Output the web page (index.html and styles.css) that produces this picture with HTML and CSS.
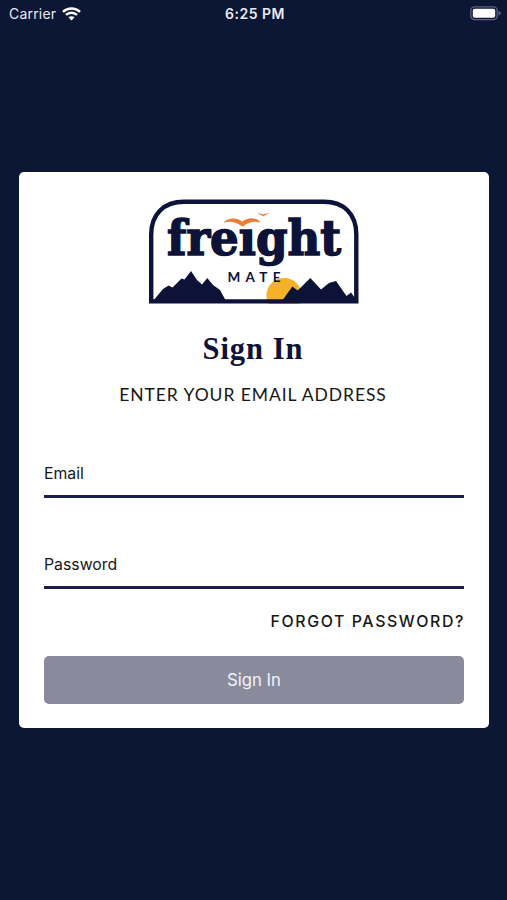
FILE: index.html
```html
<!DOCTYPE html>
<html lang="en">
<head>
<meta charset="utf-8">
<meta name="viewport" content="width=device-width, initial-scale=1">
<title>Freight Mate</title>
<link rel="stylesheet" href="styles.css">
</head>
<body>
<header class="status">
  <div class="carrier">
    <span>Carrier</span>
    <svg class="wifi" viewBox="0 0 19 14" aria-hidden="true">
      <path d="M1 4.900C5.800.4 13.200.4 18 4.900M4 7.900C7.200 5 11.800 5 15 7.900" fill="none" stroke="currentColor" stroke-width="2.500"/>
      <path d="M6.400 10.300C8.200 8.800 10.800 8.800 12.600 10.300L9.500 13.500Z" fill="currentColor"/>
    </svg>
  </div>
  <time class="clock">6:25 PM</time>
  <svg class="battery" viewBox="0 0 31 15" aria-hidden="true">
    <rect x=".8" y=".8" width="26.400" height="12.800" rx="3.600" fill="none" stroke="#5d607f" stroke-width="1.300"/>
    <path d="M28.500 4.800Q30.800 5.600 30.800 7.200T28.500 9.600Z" fill="#5d607f"/>
    <rect x="2.800" y="2.700" width="22.400" height="9" rx="1.800" fill="#fff"/>
  </svg>
</header>
<main class="card">
  <svg class="logo" viewBox="149 199 210 105" role="img" aria-label="freight mate">
    <circle cx="284" cy="295.500" r="17.600" fill="#f5b128"/>
    <path class="ink" d="M153 301L163 289L168.500 285.500L172.500 287.500L181.500 278.500L184.500 279.500L191 271L197 280L202 284.500L207.300 278L213 285L220 290L226 301ZM282 301L292.300 286.500L297.700 290.500L310.300 278L321 289.500L329 283L336 281L346.500 296L351 292.500L355 298V301Z"/>
    <path class="frame" d="M151.200 301.400V234.500C151.200 214 164 201.800 184 201.800H324C344 201.800 356.300 214 356.300 234.500V301.400Z"/>
    <text class="wordmark" x="167" y="255.300" textLength="174" lengthAdjust="spacingAndGlyphs">freıght</text>
    <path fill="#ee7c37" d="M223.500 222.500C228 217.500 237 217 242.300 221.800C247 217 257 217 260.500 222.500C254 220.800 249 221.500 242.500 226.500C236 221.500 230 220.800 223.500 222.500ZM257 213.500Q261.500 213 263.300 214.500Q265.500 213 269.500 213.500Q266 214.800 263.300 216.300Q261 214.800 257 213.500Z"/>
    <text class="mate" x="227.500" y="282" textLength="53">MATE</text>
  </svg>
  <h1 class="title">Sign In</h1>
  <p class="subtitle">ENTER YOUR EMAIL ADDRESS</p>
  <form class="form">
    <div class="field">Email</div>
    <div class="field">Password</div>
    <a class="forgot">FORGOT PASSWORD?</a>
    <button class="submit" type="button">Sign In</button>
  </form>
</main>
</body>
</html>
```
FILE: styles.css
```css
* { box-sizing: border-box; }
body {
  margin: 0;
  height: 900px;
  background: #0c1635;
  font-family: Inter, "Liberation Sans", sans-serif;
  color: #161616;
  overflow: hidden;
}
.status {
  display: grid;
  grid-template-columns: 1fr auto 1fr;
  align-items: center;
  height: 27px;
  padding: 0 6px 0 9px;
  color: #e9ebf2;
  font-size: 14px;
  line-height: 27px;
}
.carrier { display: flex; align-items: center; gap: 6px; letter-spacing: .2px; }
.wifi { width: 19px; height: 14px; color: #fff; }
.clock { font-weight: 600; letter-spacing: .5px; }
.battery { width: 31px; height: 15px; justify-self: end; }
.card {
  display: flex;
  flex-direction: column;
  align-items: center;
  width: 470px;
  height: 556px;
  margin: 145px 0 0 19px;
  padding: 27px 25px 0;
  background: #fff;
  border-radius: 5px;
}
.logo { display: block; width: 210px; height: 105px; }
.ink { fill: #0d1238; }
.frame { fill: none; stroke: #0d1238; stroke-width: 4.4; }
.wordmark {
  font: bold 49px "DejaVu Serif", serif;
  fill: #0d1238;
  stroke: #0d1238;
  stroke-width: 1.6;
}
.mate { font: bold 13.5px Lato, sans-serif; fill: #0d1238; }
.title {
  margin: 27px -1px 0 -3px;
  font: bold 30.5px/36px "Liberation Serif", serif;
  letter-spacing: 1px;
  color: #0d1238;
}
.subtitle {
  margin: 17px 1px 0 -1px;
  font: 17.5px/22px Lato, sans-serif;
  letter-spacing: .93px;
  white-space: nowrap;
}
.form { display: flex; flex-direction: column; width: 420px; margin-top: 41px; }
.field {
  height: 51px;
  margin-bottom: 39.500px;
  padding-top: 15px;
  border-bottom: 3px solid #1b1f48;
  font-size: 15.8px;
  line-height: 24px;
}
.forgot {
  align-self: flex-end;
  margin-top: -18px;
  font-size: 15.9px;
  font-weight: 500;
  line-height: 24px;
  letter-spacing: 1.6px;
  white-space: nowrap;
  margin-right: -1px;
}
.submit {
  height: 48px;
  margin-top: 22px;
  border: 0;
  border-radius: 5px;
  background: #898b9c;
  color: #f2f3f8;
  font: 16.7px Inter, sans-serif;
}
```
